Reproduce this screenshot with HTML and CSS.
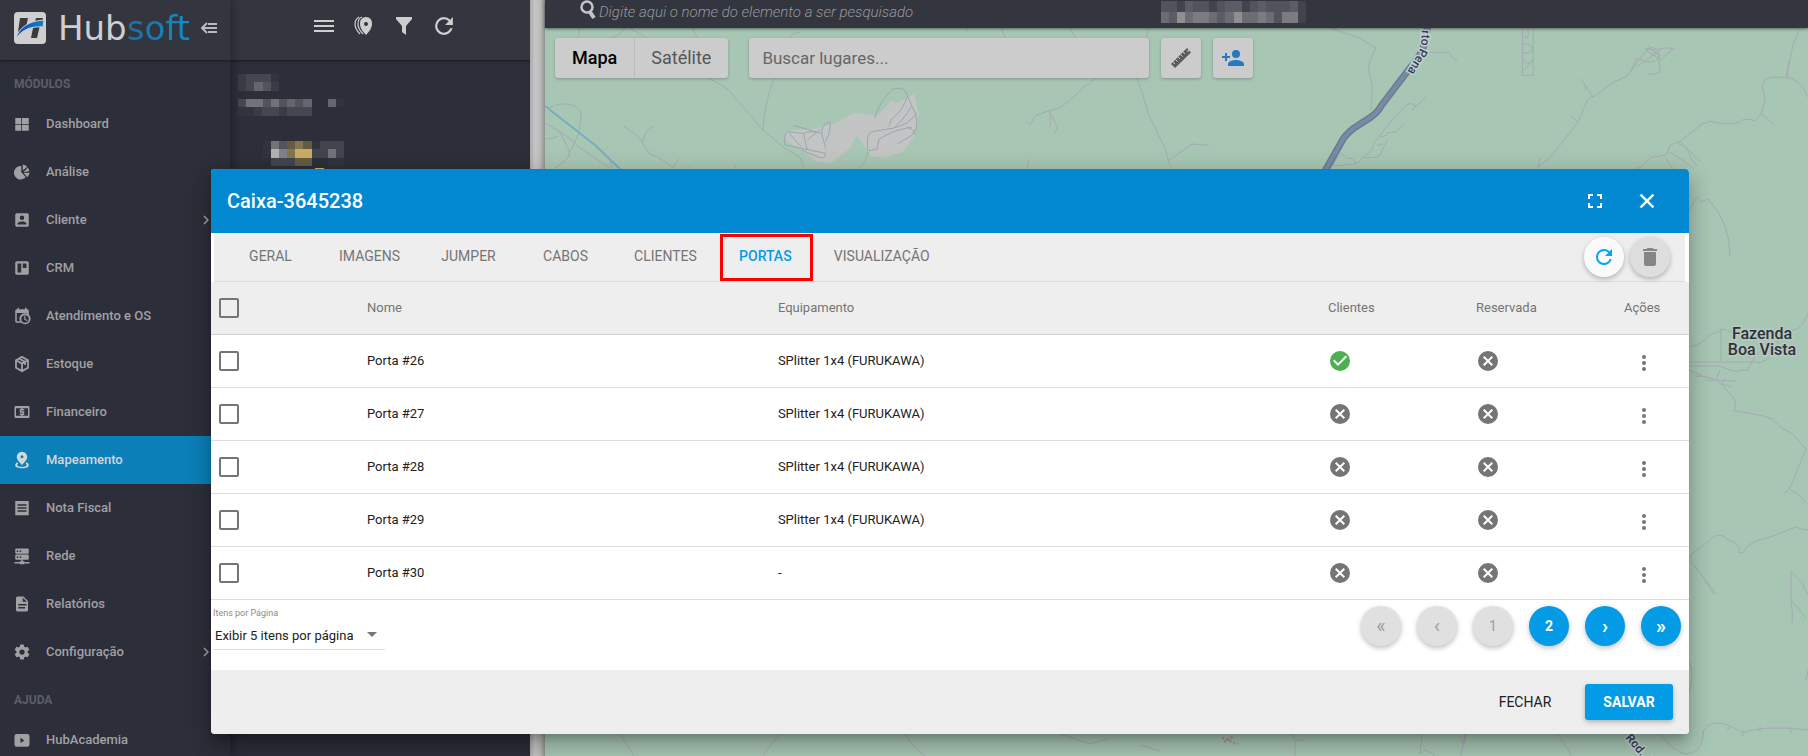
FILE: index.html
```html
<!DOCTYPE html>
<html lang="pt-BR">
<head>
<meta charset="utf-8">
<title>Hubsoft - Mapeamento</title>
<link rel="stylesheet" href="styles.css">
</head>
<body>
<svg class="defs" aria-hidden="true">
  <symbol id="i-refresh" viewBox="0 0 24 24"><path d="M17.65 6.35A7.96 7.96 0 0 0 12 4a8 8 0 1 0 7.73 10h-2.08A6 6 0 1 1 12 6c1.66 0 3.14.69 4.22 1.78L13 11h7V4z"/></symbol>
  <symbol id="i-ok" viewBox="0 0 24 24"><path d="M12 2a10 10 0 1 0 0 20 10 10 0 0 0 0-20zm-2 15l-5-5 1.41-1.41L10 14.17l7.59-7.59L19 8z"/></symbol>
  <symbol id="i-no" viewBox="0 0 24 24"><path d="M12 2a10 10 0 1 0 0 20 10 10 0 0 0 0-20zm5 13.59L15.59 17 12 13.41 8.41 17 7 15.59 10.59 12 7 8.41 8.41 7 12 10.59 15.59 7 17 8.41 13.41 12z"/></symbol>
  <symbol id="i-dots" viewBox="0 0 24 24"><circle cx="12" cy="6" r="2"/><circle cx="12" cy="12" r="2"/><circle cx="12" cy="18" r="2"/></symbol>
  <symbol id="i-chev" viewBox="0 0 24 24"><path d="M8.59 16.59L13.17 12 8.59 7.41 10 6l6 6-6 6z"/></symbol>
</svg>

<div class="app">
  <nav class="sidebar">
    <div class="brand">
      <svg class="brand-mark" viewBox="0 0 32 32">
        <defs><linearGradient id="swoosh"><stop offset="0" stop-color="#0747c4"/><stop offset="1" stop-color="#1183c4"/></linearGradient></defs>
        <rect width="32" height="32" rx="4" fill="#cfcfcf"/>
        <path fill="#3b3b3d" d="M6 6h8l-2 9-8 5zM22 6h7l-1 4-7 1zM19 16l7-3-3 13h-6z"/>
        <path fill="url(#swoosh)" stroke="#cfcfcf" d="M2 26C5 16 14 9 30 8l-1 7C18 14 9 17 2 26z"/>
      </svg>
      <span class="brand-name">Hub<b>soft</b></span>
      <button class="bare" aria-label="Recolher menu"><svg class="i16" viewBox="0 0 16 16" fill="none" stroke="#b9babd" stroke-width="2"><path d="M6 3L1 8l5 5M2 8h14M7 4h9M7 12h9"/></svg></button>
    </div>
    <h2>MÓDULOS</h2>
    <ul>
      <li><a href="#"><svg viewBox="0 0 24 24"><path d="M3 4h8v8H3zM12 4h9v8h-9zM3 13h8v8H3zM12 13h9v8h-9z"/></svg>Dashboard</a></li>
      <li><a href="#"><svg viewBox="0 0 24 24"><path d="M11 4v8l6 7A9 9 0 1 1 11 4zM13 2a9 9 0 0 1 6 3l-6 5zM20 6l2 5-8 1zM14 13h8a9 9 0 0 1-3 6z"/></svg>Análise</a></li>
      <li><a href="#"><svg viewBox="0 0 24 24"><path d="M3 5v14c0 1.1.9 2 2 2h14c1.1 0 2-.9 2-2V5c0-1.100-.9-2-2-2H5c-1.100 0-2 .9-2 2zm12 4a3 3 0 1 1-6 0 3 3 0 0 1 6 0zm-9 8c0-2 4-3.100 6-3.100s6 1.100 6 3.100v1H6z"/></svg>Cliente<svg class="chev"><use href="#i-chev"/></svg></a></li>
      <li><a href="#"><svg viewBox="0 0 24 24"><path fill-rule="evenodd" d="M5 3h14a2 2 0 0 1 2 2v14a2 2 0 0 1-2 2H5a2 2 0 0 1-2-2V5a2 2 0 0 1 2-2zm1 3v12h5V6zm7 0v6h5V6z"/></svg>CRM</a></li>
      <li><a href="#"><svg viewBox="0 0 24 24"><path fill-rule="evenodd" d="M6 1h2v2h8V1h2v2h1a2 2 0 0 1 2 2v5a7 7 0 1 1-10 11H5a2 2 0 0 1-2-2V5a2 2 0 0 1 2-2h1zM5 8v11h4.500A7 7 0 0 1 18 9V8zm11 3a5 5 0 1 0 0 10 5 5 0 0 0 0-10zm-1 1h1.500v4l3 1.500-.7 1.300L15 17z"/></svg>Atendimento e OS</a></li>
      <li><a href="#"><svg viewBox="0 0 24 24" fill="none" stroke="currentColor" stroke-width="2.400"><path d="M12 2.500l8 4.500v10l-8 4.500L4 17V7zM4 7l8 4.500L20 7M12 11.500v10M8 4.700l8 4.500v4"/></svg>Estoque</a></li>
      <li><a href="#"><svg viewBox="0 0 24 24"><path fill-rule="evenodd" d="M3 4h18l1 1v14l-1 1H3l-1-1V5zm1 3v10h16V7zm7 0h2v1h2v2h-4v1h4v5h-2v1h-2v-1H9v-2h4v-1H9V8h2z"/></svg>Financeiro</a></li>
      <li class="on"><a href="#"><svg viewBox="0 0 24 24"><path fill-rule="evenodd" d="M12 1a7 7 0 0 1 7 7c0 4-4.500 7.500-7 11-2.500-3.500-7-7-7-11a7 7 0 0 1 7-7zm0 4.500a2 2 0 1 0 0 4 2 2 0 0 0 0-4z"/><path d="M6 15c-2 1-3 2-3 4 0 3 4 4 9 4s9-1 9-4c0-2-1-3-3-4l-1 2c3 2 1 4-5 4s-8-2-5-4z"/></svg>Mapeamento</a></li>
      <li><a href="#"><svg viewBox="0 0 24 24"><path fill-rule="evenodd" d="M3 2.500h18v19H3zM6 7v2h12V7zm0 4v2h12v-2zm0 4v2h12v-2z"/></svg>Nota Fiscal</a></li>
      <li><a href="#"><svg viewBox="0 0 24 24"><path fill-rule="evenodd" d="M4 2h16l1 1v5l-1 1H4L3 8V3zm1 2.500v2h2v-2zm4 0v2h2v-2zM4 10h16l1 1v5l-1 1h-7v2h2v1h7v2h-7v1H9v-1H2v-2h7v-1h2v-2H4l-1-1v-5zm1 2.500v2h2v-2zm4 0v2h2v-2z"/></svg>Rede</a></li>
      <li><a href="#"><svg viewBox="0 0 24 24"><path d="M14 2H6a2 2 0 0 0-2 2v16c0 1.100.9 2 2 2h12a2 2 0 0 0 2-2V8zm2 16H7v-2h9zm2-4H7v-2h11zm-5-5V3.500L18.500 9z"/></svg>Relatórios</a></li>
      <li><a href="#"><svg viewBox="0 0 24 24"><path d="M19.400 13c0-.3.100-.6.100-1s0-.7-.1-1l2.100-1.600c.2-.2.200-.4.100-.6l-2-3.500c-.1-.2-.4-.3-.6-.2l-2.500 1c-.5-.4-1.100-.7-1.700-1l-.4-2.600A.5.500 0 0 0 14 2h-4c-.2 0-.5.200-.5.400l-.4 2.700c-.6.200-1.100.6-1.700 1L5 5.100c-.2-.1-.5 0-.6.200l-2 3.400c-.1.200-.1.500.1.700L4.600 11c0 .3-.1.700-.1 1s0 .7.100 1l-2.100 1.600c-.2.200-.2.400-.1.600l2 3.500c.1.200.4.300.6.200l2.500-1c.5.400 1.100.7 1.700 1l.3 2.600c0 .3.200.5.500.5h4c.3 0 .5-.2.500-.4l.4-2.700c.6-.2 1.100-.6 1.700-1l2.500 1c.2.100.5 0 .6-.2l2-3.400c.1-.2.100-.5-.1-.7zM12 15.500a3.500 3.500 0 1 1 0-7 3.500 3.500 0 0 1 0 7z"/></svg>Configuração<svg class="chev"><use href="#i-chev"/></svg></a></li>
    </ul>
    <h2>AJUDA</h2>
    <ul>
      <li><a href="#"><svg viewBox="0 0 24 24"><path fill-rule="evenodd" d="M5 4h14a3 3 0 0 1 3 3v11a3 3 0 0 1-3 3H5a3 3 0 0 1-3-3V7a3 3 0 0 1 3-3zm5 5v7l5-3.500z"/></svg>HubAcademia</a></li>
    </ul>
  </nav>

  <aside class="tree">
    <div class="tree-bar">
      <button class="bare" aria-label="Lista"><svg class="i20" viewBox="0 0 20 20" fill="none" stroke="#cecece" stroke-width="2"><path d="M0 5h20M0 10h20M0 15h20"/></svg></button>
      <button class="bare" aria-label="Marcadores"><svg class="i20" viewBox="0 0 20 20" fill="#cecece"><path fill-rule="evenodd" d="M12 1a6 6 0 0 1 6 7c0 4-3 8-6 11-3-3-6-7-6-11a6 6 0 0 1 6-7zm0 5a2 2 0 1 0 0 4 2 2 0 0 0 0-4z"/><path fill="none" stroke="#cecece" stroke-width="1.200" d="M8 1C5 2 4 5 4 8s2 7 5 10M5 1C2 3 1 5 1 8s2 7 5 10"/></svg></button>
      <button class="bare" aria-label="Filtrar"><svg class="i20" viewBox="0 0 20 20" fill="#cecece"><path d="M2 1h16v2l-6 7v9l-4-3v-6L2 3z"/></svg></button>
      <button class="bare" aria-label="Atualizar"><svg class="i20" viewBox="3 3 18 18" fill="#cecece"><use href="#i-refresh" x="0" y="0" width="24" height="24"/></svg></button>
    </div>
    <svg class="mosaic" width="106" height="96" viewBox="238 74 106 96" shape-rendering="crispEdges">
      <path fill="#393c45" d="M238 74h8v17h-8zM271 82h8v9h-8zM254 107h8v9h-8zM279 107h8v9h-8z"/>
      <path fill="#454750" d="M246 74h25v8h-25zM246 82h8v9h-8zM238 99h8v8h-8zM262 107h17v9h-17zM287 107h25v9h-25z"/>
      <path fill="#31343d" d="M271 74h8v8h-8zM238 107h16v9h-16zM336 99h8v8h-8zM263 141h8v17h-8zM312 141h8v8h-8zM328 158h16v8h-16z"/>
      <path fill="#65676f" d="M254 82h9v9h-9zM287 99h8v8h-8zM303 99h9v8h-9zM328 99h8v8h-8z"/>
      <path fill="#52545b" d="M263 82h8v9h-8zM263 99h8v8h-8zM279 99h8v8h-8zM295 99h8v8h-8zM279 141h8v8h-8z"/>
      <path fill="#737279" d="M246 99h17v8h-17zM271 99h8v8h-8zM271 141h8v8h-8zM328 149h8v9h-8z"/>
      <path fill="#b3b2b3" d="M271 149h8v9h-8z"/><path fill="#808087" d="M279 149h8v9h-8z"/>
      <path fill="#655b45" d="M287 141h8v8h-8zM303 141h9v8h-9zM295 158h17v8h-17z"/>
      <path fill="#84764f" d="M295 141h8v8h-8zM287 149h8v9h-8z"/>
      <path fill="#c7ae61" d="M295 149h17v9h-17zM315 168h9v2h-9z"/>
      <path fill="#43454e" d="M320 141h8v8h-8zM328 141h8v8h-8zM336 141h8v8h-8zM312 149h16v9h-16zM336 149h8v9h-8zM271 158h24v8h-24z"/>
    </svg>
  </aside>
  <div class="gutter"></div>

  <main class="content">
    <div class="topbar">
      <svg class="glass" viewBox="0 0 16 20" fill="none" stroke="#c4c4c6"><circle cx="7" cy="7" r="5.500" stroke-width="2.500"/><path stroke-width="4" d="M10 12l4 6"/></svg>
      <input class="find" type="text" placeholder="Digite aqui o nome do elemento a ser pesquisado" aria-label="Pesquisar elemento">
      <svg class="user" width="145" height="22" viewBox="0 0 18 2" preserveAspectRatio="none" shape-rendering="crispEdges">
        <path fill="#52535d" d="M0 0h18v2H0z"/>
        <path fill="#41434d" d="M2 0h1v1H2zM6 0h1v1H6zM10 0h1v1h-1zM17 0h1v2h-1z"/>
        <path fill="#5b5c64" d="M3 0h1v1H3zM8 0h2v1H8zM12 0h1v1h-1zM16 0h1v1h-1zM1 1h1v1H1zM7 1h1v1H7z"/>
        <path fill="#6b6d74" d="M0 1h1v1H0zM3 1h1v1H3zM6 1h1v1H6zM8 1h1v1H8zM10 1h2v1h-2zM13 1h1v1h-1z"/>
        <path fill="#7c7c80" d="M4 1h2v1H4zM12 1h1v1h-1zM15 1h2v1h-2z"/>
        <path fill="#8f8f90" d="M2 1h1v1H2zM9 1h1v1H9z"/>
      </svg>
    </div>
    <div class="map">
      <svg class="map-art" viewBox="545 28 1263 728" preserveAspectRatio="xMinYMin slice">
        <path fill="#c3c5c4" d="M784 131l30-2 22-6 18-10 12 1 11 2 14-15 6 2 17-9 5 20-5 22-10 15-20 7-13-2-14-21-8 14-18 14-14-1-14-11-16-10z"/>
        <g class="road" transform="scale(.40816 .33333) translate(1323 0)">
          <path d="M97 84l-3 28M208 84l-14 20-18 9M220 84l42 30M373 84l12 30M636 98q-20-2-24 16M414 234l46 33 87 125 50 50 40 30 10 34M574 234q-28 90-27 158M1042 84l8 11M1130 84l10 30M1298 84l14 30M1490 84l-4 30M1365 234q-20 20-35 28-30 40-55 60l-60 24-15 28-8-8M1250 330v50M1252 345q10 20 16 38l-10 20M1462 234l15 50 14 60 40 100 15 62M1545 478l23-20M14 370q60 40 80 70l76 64M20 325q30-20 60-10 25 10 20 45l-5 40-30 80-30 26M45 390q30 60 28 80M14 416q20 0 30-8M203 377l40 35 25 50q30 10 58 42M250 430l10-35 17-16M325 504l16-28M477 492v14M1196 477v20l-8 10M365 500l-5 8M783 504q15-15 22-52M172 480l4 26"/>
        </g>
        <g class="lot" transform="scale(.40816 .33333) translate(1323 0)">
          <path d="M820 355q10-50 45-88 30-10 35 20l20 55q10 40-10 65-20 15-34 24M605 395q-10 20-5 40l60 15 40 10q0 20-20 10l-40-20M605 395l40 5q20-10 45 0l10 45M621 376l55 20M690 400q0-30 20-35 5 20-10 60M645 400l10 50M655 420l30-30M610 400l30 40M803 450q-5-50 10-55l50-10q40-10 60-45M806 452l20-5 5-30q40-30 80-35M900 290q-10 40-40 70l-5 20M870 380q20-20 40-60M898 380q20 10 22 25"/>
        </g>
        <g class="road" transform="scale(.40048 .33333) translate(2946.500 0)">
          <path d="M375 84l70 28 44 32q-20 40-18 70 10 40 9 60l-3 56M618 157h55q0 15 20 25M614 292l-26 28q-10-20-30 3-30 35-60 85 15 5 22-10l20-2 20-26M588 316l-8 15M498 410l-14 20-5 20-22 22h35q10-5 14-25l12-27M506 433l-14 4M457 472l-16 20-60 6q10-25 22-38l15 15q14-5 22 17M0 458l30-26 42 4M855 84v142h27V84M870 84q0 50-12 20M855 132q25 0 24 15-4 20-24 9M858 212l24-35M857 178q10 20 24 5M1545 92l-14 40-5 30-13 70M1516 232l4-50M1000 236l15 25 17 30M1012 255v14M893 502q20-20 28-25l30-45 42-65 20-55q5-20 20-22l50-45 32-15 25-40 30-45q20-10 25 20l4 50q-15 10-30 8M893 502l6-28M975 346l18 20M1125 215l15-40 20 10q35 5 38-20-20-10-28-30M1160 145l25 5q25-10 47-5-20 20-30 35l-40-30M1140 200l60-50M1568 292q-20-60-60-60-55-5-55 25l8 40-10 45-15 20q-30-10-40 5-30 10-70-3l-22 8q-30 30-60 55l-20 8-10 30-40 8q-25 38-50 38l-12-5M1452 342l33 33M1245 430q30 20 30 45l18 24M1250 425q25 30 50 60M1221 455q30 20 62 50M1212 473l20 35"/>
        </g>
        <g class="road">
          <path d="M1689 210l8-13 4 5 7-3q22 22 22 58M1689 347q15-3 20-12l16-6 5 3 5-3M1721 328v33M1808 314q-7 15-14 16-17 2-17 16-10 20-23 16h-65M1689 366h30q20 8 22 4h7q8-20 17-20M1689 370q15 8 28 10 15 15 19 22l-2 9q26 3 38 8l10 9q12 5 24 21l-16 39q-1 3-6 5M1705 380l30 1M1695 376q15 0 22 5M1720 370l-4 10M1725 378l-3 6 10 3M1791 490q10 5 15 13M1689 559q4-8 12-12l11-9q8-6 15 1l8 4q5 4 5 10 4 0 5-3 2-6 15-10 10-2 35-13l10 3q8-1 14-10M1689 560l9 10 18 24M1808 594q-4-4-5-10l-12-13v30q2 15 1 22M1704 580l10 14M1791 600l15 18M1808 670l-2 10M1689 662q6 10 0 32"/>
          <path d="M1660 734q15 18 25 20 18 0 18-22 4-9 14-9t26 10q18-8 65-3M1703 730v8M1730 726l-3 5M1743 730v6M1760 726v6M1791 727v6M1292 734l3 7v15M1295 740h10M1422 734l-2 20 5-4 9 4-1 5M1465 734l-4 22M1466 734l-2 10-5-7M1558 734l14 22M620 734l14 22M780 734l-18 22M905 734q5 10 20 22M1060 734l30 10 20-6M1140 745l20 6"/>
        </g>
        <path fill="none" stroke="#b58a98" stroke-width="2" stroke-dasharray="2 2" d="M1222 738l16 6M1224 742l10-6"/>
        <path fill="none" stroke="#76aec0" stroke-width="2" d="M545 106l50 39 27 26"/>
        <path fill="none" stroke="#677c92" stroke-width="7" d="M1427 24q1 25-17 44l-29 38q-3 6-10 11l-17 11q-9 7-12 13l-17 30"/>
        <path fill="none" stroke="#798ba3" stroke-width="4" d="M1427 24q1 25-17 44l-29 38q-3 6-10 11l-17 11q-9 7-12 13l-17 30"/>
        <path id="label-a" fill="none" d="M1422 30L1421 44Q1420 54 1396 88"/>
        <text class="street"><textPath href="#label-a">rto Pena</textPath></text>
        <path id="label-b" fill="none" d="M1625 738l34 40"/>
        <text class="street"><textPath href="#label-b">Rod. J</textPath></text>
        <text class="place" x="1762" y="339">Fazenda</text>
        <text class="place" x="1762" y="355">Boa Vista</text>
      </svg>
      <div class="map-tools">
        <div class="map-type"><button class="sel">Mapa</button><button>Satélite</button></div>
        <input class="map-search" type="text" placeholder="Buscar lugares..." aria-label="Buscar lugares">
        <button class="map-btn" aria-label="Medir"><svg class="i24" viewBox="0 0 24 24"><path fill="#5c5c5c" d="M2 18L18 2l1.500 1.500-1.500 1.500 1 1 1.500-1.500 1.500 2L6 22l-4-4z"/><path stroke="#ccc" d="M4 16l2 2M6.500 13.500l2 2M9 11l2 2M11.500 8.500l2 2M14 6l2 2"/></svg></button>
        <button class="map-btn" aria-label="Adicionar pessoa"><svg class="i24" viewBox="0 0 24 24" fill="#2579c4"><path d="M15 12a4 4 0 1 0 0-8 4 4 0 0 0 0 8zm-9-2V7H4v3H1v2h3v3h2v-3h3v-2zm9 4c-2.700 0-8 1.300-8 4v2h16v-2c0-2.700-5.300-4-8-4z"/></svg></button>
      </div>
    </div>
  </main>
</div>

<div class="overlay">
  <section class="dialog" role="dialog" aria-labelledby="dlg-title">
    <header>
      <h1 id="dlg-title">Caixa-3645238</h1>
      <button class="bare" aria-label="Tela cheia"><svg class="i24" viewBox="0 0 24 24" fill="#fff"><path d="M5 5h5v2H7v3H5zM14 5h5v5h-2V7h-3zM17 14h2v5h-5v-2h3zM5 14h2v3h3v2H5z"/></svg></button>
      <button class="bare" aria-label="Fechar janela"><svg class="i24" viewBox="0 0 24 24" fill="#fff" stroke="#fff" stroke-width=".5"><path d="M19 6.400L17.600 5 12 10.600 6.400 5 5 6.400 10.600 12 5 17.600 6.400 19 12 13.400 17.600 19 19 17.600 13.400 12z"/></svg></button>
    </header>
    <div class="tabs-row">
      <div class="tabs" role="tablist">
        <button role="tab">GERAL</button><button role="tab">IMAGENS</button><button role="tab">JUMPER</button><button role="tab">CABOS</button><button role="tab">CLIENTES</button><button role="tab" class="on" aria-selected="true">PORTAS</button><button role="tab">VISUALIZAÇÃO</button>
      </div>
      <button class="fab" aria-label="Recarregar"><svg class="i24" fill="#03a9f4"><use href="#i-refresh"/></svg></button>
      <button class="fab off" aria-label="Excluir" disabled><svg class="i24" viewBox="0 0 24 24" fill="#868686"><path d="M6 19c0 1.100.9 2 2 2h8a2 2 0 0 0 2-2V7H6zM19 4h-3.500l-1-1h-5l-1 1H5v2h14z"/></svg></button>
    </div>
    <table>
      <colgroup><col class="c-check"><col class="c-name"><col><col class="c-flag"><col class="c-flag"><col class="c-act"></colgroup>
      <thead><tr><th><input type="checkbox" aria-label="Selecionar todas"></th><th>Nome</th><th>Equipamento</th><th>Clientes</th><th>Reservada</th><th>Ações</th></tr></thead>
      <tbody>
        <tr><td><input type="checkbox" aria-label="Porta #26"></td><td>Porta #26</td><td>SPlitter 1x4 (FURUKAWA)</td><td><svg class="flag yes"><use href="#i-ok"/></svg></td><td><svg class="flag"><use href="#i-no"/></svg></td><td><button class="bare more" aria-label="Ações da porta #26"><svg class="i24"><use href="#i-dots"/></svg></button></td></tr>
        <tr><td><input type="checkbox" aria-label="Porta #27"></td><td>Porta #27</td><td>SPlitter 1x4 (FURUKAWA)</td><td><svg class="flag"><use href="#i-no"/></svg></td><td><svg class="flag"><use href="#i-no"/></svg></td><td><button class="bare more" aria-label="Ações da porta #27"><svg class="i24"><use href="#i-dots"/></svg></button></td></tr>
        <tr><td><input type="checkbox" aria-label="Porta #28"></td><td>Porta #28</td><td>SPlitter 1x4 (FURUKAWA)</td><td><svg class="flag"><use href="#i-no"/></svg></td><td><svg class="flag"><use href="#i-no"/></svg></td><td><button class="bare more" aria-label="Ações da porta #28"><svg class="i24"><use href="#i-dots"/></svg></button></td></tr>
        <tr><td><input type="checkbox" aria-label="Porta #29"></td><td>Porta #29</td><td>SPlitter 1x4 (FURUKAWA)</td><td><svg class="flag"><use href="#i-no"/></svg></td><td><svg class="flag"><use href="#i-no"/></svg></td><td><button class="bare more" aria-label="Ações da porta #29"><svg class="i24"><use href="#i-dots"/></svg></button></td></tr>
        <tr><td><input type="checkbox" aria-label="Porta #30"></td><td>Porta #30</td><td>-</td><td><svg class="flag"><use href="#i-no"/></svg></td><td><svg class="flag"><use href="#i-no"/></svg></td><td><button class="bare more" aria-label="Ações da porta #30"><svg class="i24"><use href="#i-dots"/></svg></button></td></tr>
      </tbody>
    </table>
    <div class="pager">
      <div class="per-page">
        <label for="pp">Itens por Página</label>
        <div class="select"><select id="pp"><option>Exibir 5 itens por página</option></select><svg width="10" height="5" viewBox="0 0 10 5"><path fill="#757575" d="M0 0h10L5 5z"/></svg></div>
      </div>
      <button class="step" disabled>«</button><button class="step" disabled>‹</button><button disabled>1</button><button>2</button><button class="step">›</button><button class="step">»</button>
    </div>
    <footer><button class="flat">FECHAR</button><button class="raised">SALVAR</button></footer>
  </section>
</div>
</body>
</html>
```
FILE: styles.css
```css
* { box-sizing: border-box; }
body { margin: 0; font: 13px/20px Roboto, "Noto Sans", sans-serif; overflow: hidden; }
button, input, select { font: inherit; color: inherit; margin: 0; }
button { border: 0; padding: 0; cursor: pointer; }
svg { display: block; flex: none; }
.defs { position: absolute; width: 0; height: 0; }
.bare { background: none; }
.i16 { width: 16px; height: 16px; }
.i20 { width: 20px; height: 20px; }
.i24 { width: 24px; height: 24px; }

.app { display: flex; height: 100vh; background: #2c2e39; }

.sidebar { width: 230px; flex: none; overflow: hidden; position: relative; z-index: 1; box-shadow: 2px 0 10px rgba(0,0,0,.3); background: #2c2e39; }
.brand { display: flex; align-items: center; height: 60px; padding: 0 13px 4px 14px; background: #33363f; box-shadow: 0 1px 2px rgba(0,0,0,.5); position: relative; }
.brand-mark { width: 32px; height: 32px; margin-right: 12px; }
.brand-name { flex: 1; font: 34px/32px "DejaVu Sans", sans-serif; color: #cfcfcf; }
.brand-name b { font-weight: 400; background: linear-gradient(90deg, #1f6da6, #0f8fc4); -webkit-background-clip: text; background-clip: text; color: transparent; }
.sidebar h2 { margin: 0; height: 40px; padding: 14px 14px 0; font-size: 12px; line-height: 20px; font-weight: 700; color: #5c5e66; }
.sidebar ul { list-style: none; margin: 0; padding: 0; }
.sidebar a { display: flex; align-items: center; gap: 15px; height: 48px; padding: 0 15px 0 13px; color: #a0a1a5; font-weight: 500; text-decoration: none; }
.sidebar a svg { width: 18px; height: 18px; fill: currentColor; }
.sidebar a svg[fill="none"] { fill: none; }
.sidebar a .chev { margin-left: auto; }
.sidebar .on a { background: #0b7fb8; color: #d3d7da; }

.tree { width: 300px; flex: none; }
.tree-bar { display: flex; align-items: center; gap: 20px; height: 60px; padding: 0 0 8px 84px; background: #33363f; box-shadow: 0 1px 2px rgba(0,0,0,.5); }
.mosaic { margin: 14px 8px; }
.gutter { width: 15px; flex: none; background: linear-gradient(90deg, #a9a9a9, #c6c6c6 5px, #bcbcbc 10px, #8f9291); }

.content { flex: 1; min-width: 0; display: flex; flex-direction: column; }
.topbar { display: flex; gap: 3px; height: 28px; padding: 0 35px; background: #33353f; box-shadow: 0 1px 3px rgba(0,0,0,.5); position: relative; z-index: 1; }
.glass { width: 16px; height: 20px; }
.find { width: 559px; height: 24px; padding: 0; border: 0; outline: 0; background: none; font-size: 15px; font-style: italic; font-weight: 300; }
.find::placeholder { color: #96989d; opacity: 1; }
.user { margin-top: 1px; }

.map { flex: 1; position: relative; background: #a8c6b4; overflow: hidden; }
.map-art { position: absolute; inset: 0; width: 100%; height: 100%; }
.road path, .lot path { fill: none; stroke: #a5aab3; stroke-width: 1; vector-effect: non-scaling-stroke; }
.lot path { stroke: #97a7b0; }
.street { font: 500 12px Roboto, sans-serif; fill: #2f3d56; stroke: #c5cfcf; stroke-width: 3px; paint-order: stroke; }
.place { font: 500 16px Roboto, sans-serif; fill: #2e3238; stroke: #b9c8c2; stroke-width: 3px; paint-order: stroke; text-anchor: middle; }
.map-tools { position: relative; display: flex; padding: 10px; gap: 12px; }
.map-type, .map-search, .map-btn { height: 40px; border: 0; border-radius: 3px; background: #ccc; box-shadow: 0 1px 3px rgba(0,0,0,.25); }
.map-type { display: flex; margin-right: 9px; }
.map-type button { padding: 0 17px; background: none; font-size: 18px; color: #565656; }
.map-type .sel { color: #000; font-weight: 500; box-shadow: 1px 0 #bbb; }
.map-search { width: 400px; padding: 0 13px; font-size: 17px; }
.map-search::placeholder { color: #666; opacity: 1; }
.map-btn { width: 40px; display: grid; place-items: center; }

.overlay { position: absolute; inset: 0; z-index: 5; padding: 169px 119px 22px 211px; }
.dialog { background: #fff; border-radius: 4px; overflow: hidden; box-shadow: 0 7px 8px -4px rgba(0,0,0,.2), 0 13px 19px 2px rgba(0,0,0,.14), 0 5px 24px 4px rgba(0,0,0,.12); }
.dialog header { display: flex; align-items: center; gap: 28px; height: 64px; padding: 0 30px 0 16px; background: #0288d1; color: #fff; }
.dialog h1 { flex: 1; margin: 0; font-size: 20px; line-height: 24px; font-weight: 500; }
.tabs-row { display: flex; align-items: center; gap: 6px; height: 49px; padding: 0 15px 1px 0; border: solid #fff; border-width: 0 4px 0 3px; background: #eee; box-shadow: inset 0 -1px #ddd; }
.tabs { flex: 1; display: flex; padding-left: 8px; }
.tabs button { min-width: 97px; height: 48px; padding: 0 20px 2px; background: none; font-size: 14px; color: #757575; position: relative; }
.tabs .on { color: #039be5; font-weight: 500; }
.tabs .on::after { content: ""; position: absolute; inset: 1px 1px 0 3px; border: 3px solid #f00; }
.fab { width: 40px; height: 40px; border-radius: 50%; display: grid; place-items: center; background: #fafafa; box-shadow: 0 2px 5px rgba(0,0,0,.26); }
.fab.off { background: #dedede; }

table { width: 100%; table-layout: fixed; border-collapse: separate; border-spacing: 0; }
.c-check { width: 156px; }
.c-name { width: 27.8%; }
.c-flag { width: 148px; }
.c-act { width: 65px; }
th, td { height: 53px; padding: 0; border-bottom: 1px solid #dedede; text-align: left; }
th { background: #eee; border-color: #cfcfcf; color: #757575; font-weight: 400; }
td { color: #212121; }
th:first-child, td:first-child { padding-left: 8px; }
input[type=checkbox] { display: block; appearance: none; width: 20px; height: 20px; border: 2px solid #757575; border-radius: 2px; }
.flag { width: 24px; height: 24px; fill: #757575; }
.flag.yes { fill: #4caf50; }
.more { display: block; padding: 4px 0 0 8px; }
.more svg { fill: #757575; }

.pager { display: flex; gap: 16px; height: 70px; padding: 6px 8px 0 2px; }
.pager > button { width: 40px; height: 40px; border-radius: 50%; background: #039be5; color: #fff; font-size: 14px; font-weight: 700; box-shadow: 0 2px 5px rgba(0,0,0,.26); }
.pager > button:disabled { background: #e0e0e0; color: #9e9e9e; font-weight: 400; }
.pager > .step { font-size: 20px; }
.per-page { margin-right: auto; }
.per-page label { display: block; font-size: 9px; line-height: 14px; color: #8a8a8a; }
.select { display: grid; align-items: center; width: 172px; height: 30px; border-bottom: 1px solid #dcdcdc; }
.select > * { grid-area: 1 / 1; }
.select select { appearance: none; border: 0; outline: 0; padding: 2px 2px 0; width: 100%; height: 28px; background: none; color: #212121; }
.select svg { justify-self: end; margin-right: 8px; pointer-events: none; }
.dialog footer { display: flex; justify-content: flex-end; align-items: center; gap: 16px; height: 64px; padding: 0 16px; background: #eee; }
footer button { height: 36px; width: 88px; border-radius: 3px; font-size: 14px; }
.flat { background: none; color: #212121; }
.raised { background: #039be5; color: #fff; font-weight: 700; box-shadow: 0 2px 5px rgba(0,0,0,.26); }
```
